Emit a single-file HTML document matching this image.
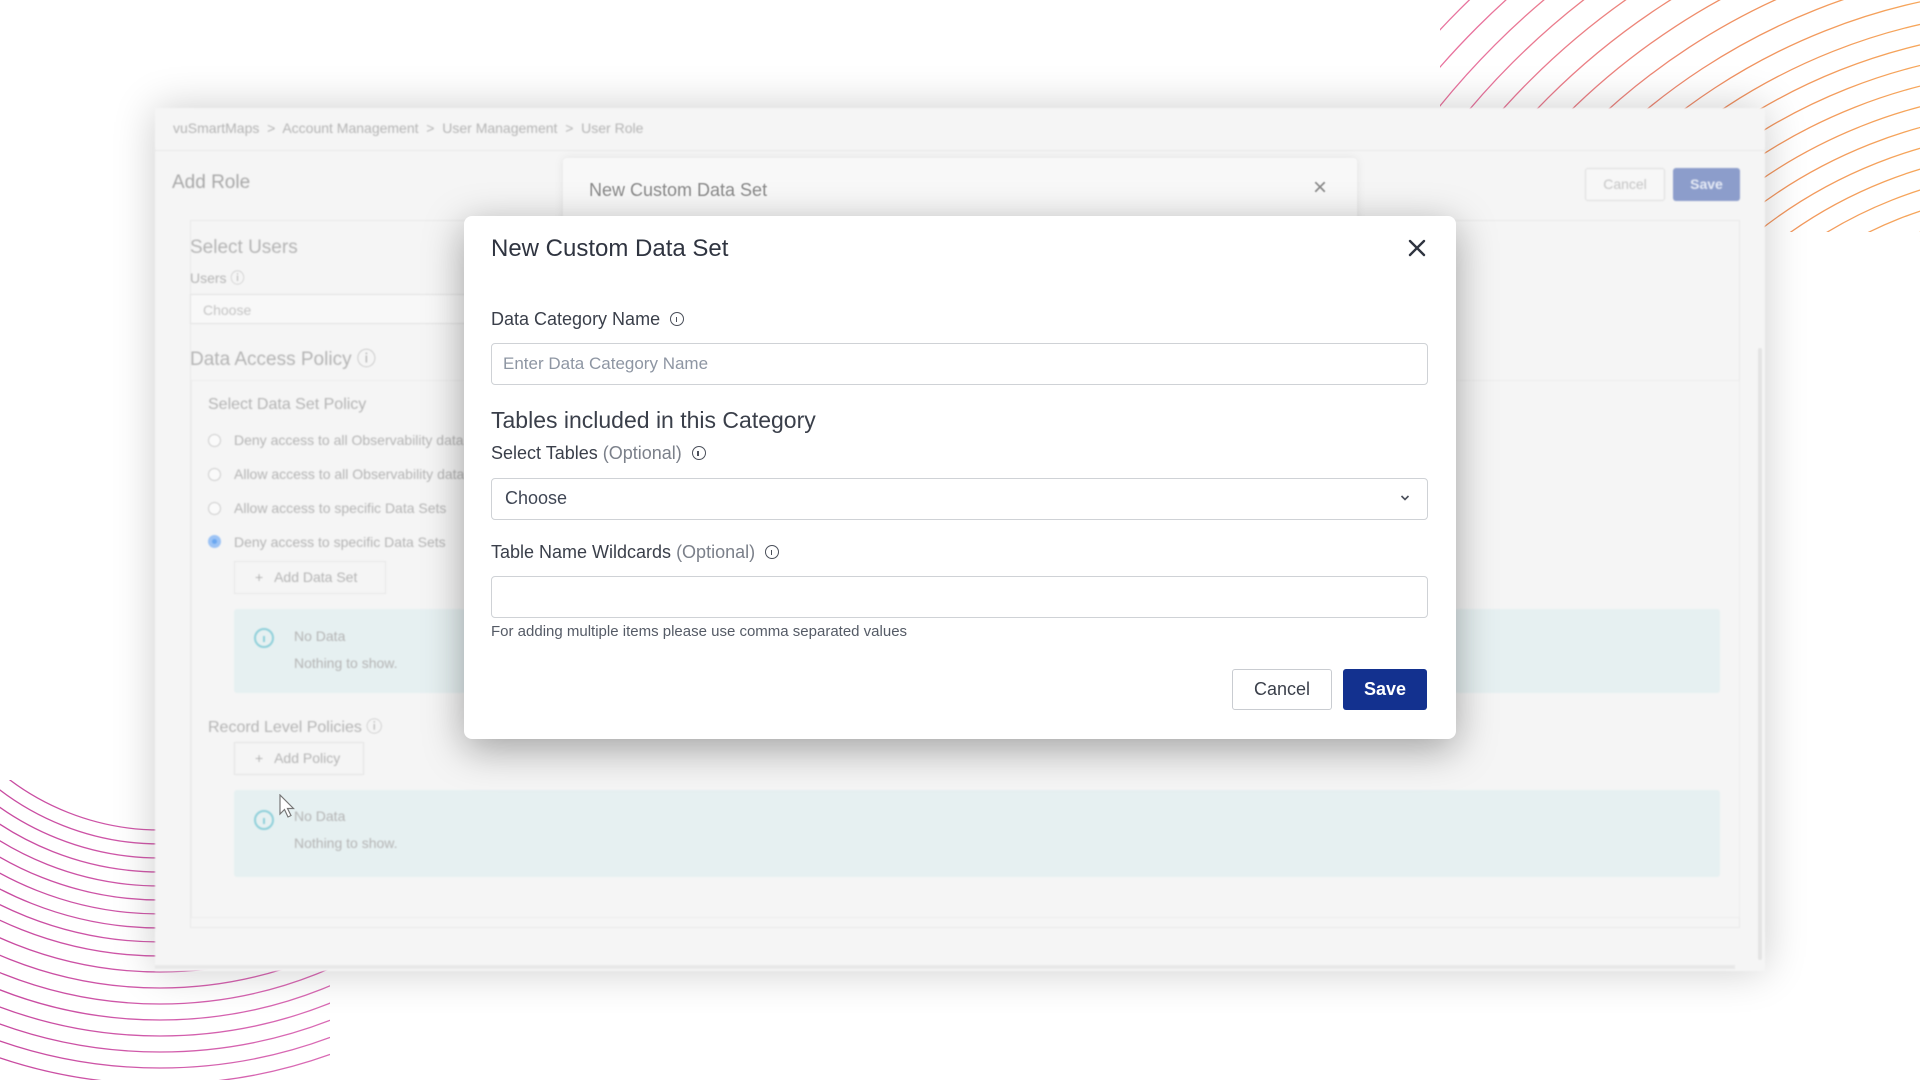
<!DOCTYPE html>
<html><head><meta charset="utf-8"><style>
*{box-sizing:border-box;margin:0;padding:0}
body{width:1920px;height:1080px;overflow:hidden;background:#fff;font-family:"Liberation Sans",Arial,sans-serif;position:relative}
.abs{position:absolute}
#deco{position:absolute;left:0;top:0}
#back{position:absolute;left:155px;top:108px;width:1610px;height:863px;background:#f5f5f5;box-shadow:0 0 40px rgba(0,0,0,.2);filter:blur(0.8px);color:#b4b4b4;overflow:hidden}
#back .t{position:absolute;white-space:nowrap}
.radio{position:absolute;width:13px;height:13px;border:1px solid #ccc;border-radius:50%;background:#fafafa}
.nodata{position:absolute;background:#e6f0f1;border-radius:3px}
.ic{position:absolute;width:20px;height:20px;border:2px solid #8fd0da;border-radius:50%}
.ic:after{content:"";position:absolute;left:7px;top:6px;width:2px;height:6px;background:#8fd0da}
#mid{position:absolute;left:563px;top:158px;width:794px;height:70px;background:#f8f8f8;border-radius:4px;box-shadow:0 0 10px rgba(0,0,0,.08);filter:blur(0.5px)}
#modal{position:absolute;left:464px;top:216px;width:992px;height:523px;background:#fff;border-radius:8px;box-shadow:0 10px 40px rgba(0,0,0,.35)}
.lbl{position:absolute;left:27px;font-size:18px;color:#3a3f4a;white-space:nowrap}
.lbl .o{color:#7b808a}
.inp{position:absolute;left:27px;width:937px;height:42px;border:1.5px solid #cfd2d6;border-radius:4px;background:#fff}
.info{display:inline-block;width:14px;height:14px;border:1.5px solid #4a4f5a;border-radius:50%;vertical-align:-1px;margin-left:10px;position:relative}
.info:after{content:"";position:absolute;left:4.5px;top:3.5px;width:1.6px;height:5px;background:#4a4f5a}
</style></head><body>
<svg id="deco" width="1920" height="1080">
<defs>
<linearGradient id="g1" x1="1480" y1="0" x2="1920" y2="0" gradientUnits="userSpaceOnUse"><stop offset="0" stop-color="#e8739e"/><stop offset="0.6" stop-color="#f0925f"/><stop offset="1" stop-color="#f6a65a"/></linearGradient>
<linearGradient id="g2" x1="0" y1="0" x2="300" y2="0" gradientUnits="userSpaceOnUse"><stop offset="0" stop-color="#c84aa0"/><stop offset="1" stop-color="#d96ab4"/></linearGradient>
<clipPath id="c1"><rect x="1440" y="0" width="480" height="232"/></clipPath>
<clipPath id="c2"><rect x="0" y="780" width="330" height="300"/></clipPath>
</defs>
<g fill="none" stroke="url(#g1)" stroke-width="1.3" clip-path="url(#c1)">
<circle cx="2050" cy="600" r="390"/><circle cx="2050" cy="600" r="410"/><circle cx="2050" cy="600" r="430"/><circle cx="2050" cy="600" r="450"/><circle cx="2050" cy="600" r="470"/><circle cx="2050" cy="600" r="490"/><circle cx="2050" cy="600" r="510"/><circle cx="2050" cy="600" r="530"/><circle cx="2050" cy="600" r="550"/><circle cx="2050" cy="600" r="570"/><circle cx="2050" cy="600" r="590"/><circle cx="2050" cy="600" r="612"/><circle cx="2050" cy="600" r="635"/><circle cx="2050" cy="600" r="660"/><circle cx="2050" cy="600" r="685"/><circle cx="2050" cy="600" r="710"/><circle cx="2050" cy="600" r="735"/><circle cx="2050" cy="600" r="760"/><circle cx="2050" cy="600" r="785"/><circle cx="2050" cy="600" r="810"/><circle cx="2050" cy="600" r="835"/>
</g>
<g fill="none" stroke="url(#g2)" stroke-width="1.3" clip-path="url(#c2)">
<circle cx="160" cy="580" r="250"/><circle cx="160" cy="580" r="264"/><circle cx="160" cy="580" r="278"/><circle cx="160" cy="580" r="292"/><circle cx="160" cy="580" r="306"/><circle cx="160" cy="580" r="320"/><circle cx="160" cy="580" r="334"/><circle cx="160" cy="580" r="348"/><circle cx="160" cy="580" r="362"/><circle cx="160" cy="580" r="376"/><circle cx="160" cy="580" r="392"/><circle cx="160" cy="580" r="408"/><circle cx="160" cy="580" r="424"/><circle cx="160" cy="580" r="440"/><circle cx="160" cy="580" r="456"/><circle cx="160" cy="580" r="472"/><circle cx="160" cy="580" r="488"/><circle cx="160" cy="580" r="504"/>
</g>
</svg>

<div id="back">
  <div class="t" style="left:18px;top:12px;font-size:14px">vuSmartMaps &nbsp;&gt;&nbsp; Account Management &nbsp;&gt;&nbsp; User Management &nbsp;&gt;&nbsp; User Role</div>
  <div class="abs" style="left:0;top:42px;width:1610px;height:1px;background:#e8e8e8"></div>
  <div class="t" style="left:17px;top:64px;font-size:19px;color:#a8a8a8">Add Role</div>
  <div class="abs" style="left:1430px;top:60px;width:80px;height:33px;border:1px solid #ddd;border-radius:3px;background:#f7f7f7;font-size:14px;line-height:31px;text-align:center;color:#c4c4c4">Cancel</div>
  <div class="abs" style="left:1518px;top:60px;width:67px;height:33px;border-radius:3px;background:#8c9dcb;font-size:14px;line-height:33px;text-align:center;color:#e8ecf6;font-weight:bold">Save</div>
  <div class="abs" style="left:35px;top:112px;width:1550px;height:708px;border:1px solid #e9e9e9;background:#f5f5f5"></div>
  <div class="t" style="left:35px;top:129px;font-size:19px">Select Users</div>
  <div class="t" style="left:35px;top:160px;font-size:14px">Users ⓘ</div>
  <div class="abs" style="left:35px;top:186px;width:400px;height:30px;border:1px solid #e2e2e2;background:#f8f8f8;font-size:14px;padding:7px 12px;color:#c4c4c4">Choose</div>
  <div class="t" style="left:35px;top:236px;font-size:19px">Data Access Policy ⓘ</div>
  <div class="abs" style="left:36px;top:272px;width:1549px;height:538px;border:1px solid #ececec"></div>
  <div class="t" style="left:53px;top:288px;font-size:16px">Select Data Set Policy</div>
  <div class="radio" style="left:53px;top:326px"></div><div class="t" style="left:79px;top:324px;font-size:14px">Deny access to all Observability data</div>
  <div class="radio" style="left:53px;top:360px"></div><div class="t" style="left:79px;top:358px;font-size:14px">Allow access to all Observability data</div>
  <div class="radio" style="left:53px;top:394px"></div><div class="t" style="left:79px;top:392px;font-size:14px">Allow access to specific Data Sets</div>
  <div class="radio" style="left:53px;top:427px;border:4px solid #9cc3f5;background:#6aa7f0"></div><div class="t" style="left:79px;top:426px;font-size:14px">Deny access to specific Data Sets</div>
  <div class="abs" style="left:79px;top:453px;width:152px;height:33px;border:1px solid #e6e6e6;font-size:14px;line-height:31px;padding-left:20px">+ &nbsp; Add Data Set</div>
  <div class="nodata" style="left:79px;top:501px;width:1486px;height:84px"></div>
  <div class="ic" style="left:99px;top:520px"></div>
  <div class="t" style="left:139px;top:520px;font-size:14px">No Data</div>
  <div class="t" style="left:139px;top:547px;font-size:14px">Nothing to show.</div>
  <div class="t" style="left:53px;top:605px;font-size:16px">Record Level Policies ⓘ</div>
  <div class="abs" style="left:79px;top:634px;width:130px;height:33px;border:1px solid #e3e3e3;font-size:14px;line-height:31px;padding-left:20px">+ &nbsp; Add Policy</div>
  <div class="nodata" style="left:79px;top:682px;width:1486px;height:87px"></div>
  <div class="ic" style="left:99px;top:702px"></div>
  <div class="t" style="left:139px;top:700px;font-size:14px">No Data</div>
  <div class="t" style="left:139px;top:727px;font-size:14px">Nothing to show.</div>
  <div class="abs" style="left:1603px;top:240px;width:4px;height:612px;background:#e4e4e4;border-radius:2px"></div>
  <div class="abs" style="left:0;top:857px;width:1580px;height:4px;background:#e8e8e8"></div>
</div>

<div id="mid">
  <div class="abs" style="left:26px;top:22px;font-size:18px;color:#8a8a8a">New Custom Data Set</div>
  <div class="abs" style="left:750px;top:16px;font-size:24px;color:#8a8a8a">×</div>
</div>

<div id="modal">
  <div class="abs" style="left:27px;top:19px;font-size:24px;color:#2f3440">New Custom Data Set</div>
  <svg class="abs" style="left:944px;top:23px" width="18" height="18"><path d="M2 2L16 16M16 2L2 16" stroke="#2f3440" stroke-width="2.4" stroke-linecap="round"/></svg>
  <div class="lbl" style="top:93px">Data Category Name<span class="info"></span></div>
  <div class="inp" style="top:127px"><span class="abs" style="left:11px;top:10px;font-size:17px;color:#8e96a3">Enter Data Category Name</span></div>
  <div class="abs" style="left:27px;top:191px;font-size:23px;color:#3a3f4a">Tables included in this Category</div>
  <div class="lbl" style="top:227px">Select Tables <span class="o">(Optional)</span><span class="info"></span></div>
  <div class="inp" style="top:262px"><span class="abs" style="left:13px;top:9px;font-size:18px;color:#3f4654">Choose</span>
    <svg class="abs" style="left:908px;top:15px" width="10" height="8"><path d="M1.5 2L5 5.5L8.5 2" stroke="#4a4f5a" stroke-width="1.6" fill="none"/></svg></div>
  <div class="lbl" style="top:326px">Table Name Wildcards <span class="o">(Optional)</span><span class="info"></span></div>
  <div class="inp" style="top:360px"></div>
  <div class="abs" style="left:27px;top:407px;font-size:15px;color:#555b66">For adding multiple items please use comma separated values</div>
  <div class="abs" style="left:768px;top:453px;width:100px;height:41px;border:1.5px solid #c9ccd1;border-radius:3px;font-size:18px;line-height:38px;text-align:center;color:#3a3f4a">Cancel</div>
  <div class="abs" style="left:879px;top:453px;width:84px;height:41px;border-radius:3px;background:#13318f;font-size:18px;line-height:41px;text-align:center;color:#fff;font-weight:bold">Save</div>
</div>

<svg class="abs" style="left:279px;top:794px" width="18" height="26"><path d="M1 1L1 20L5.5 15.5L9 23L12 21.5L8.5 14.5L14.5 14.5Z" fill="#fff" stroke="#777" stroke-width="1.2"/></svg>
</body></html>
